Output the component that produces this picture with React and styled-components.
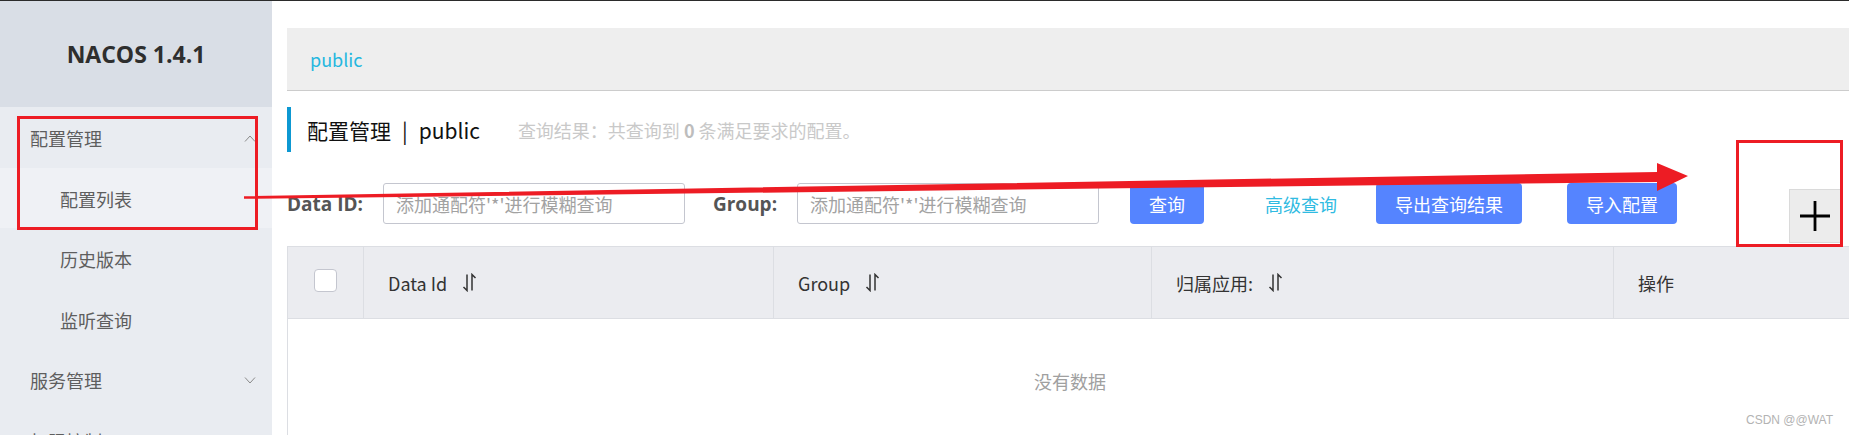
import styled, { createGlobalStyle } from "styled-components";

const GlobalStyle = createGlobalStyle`
  html, body {
    margin: 0;
    padding: 0;
  }
  body {
    overflow: hidden;
    background: #fff;
    font-family: "Noto Sans CJK SC", "Noto Sans", sans-serif;
  }
`;

const menu = [
  { label: "配置管理", open: true },
  { label: "配置列表", sub: true, active: true },
  { label: "历史版本", sub: true },
  { label: "监听查询", sub: true },
  { label: "服务管理", open: false },
  { label: "权限控制", open: false },
];

const columns = [
  { key: "id", label: "Data Id", sort: true },
  { key: "group", label: "Group", sort: true },
  { key: "app", label: "归属应用:", sort: true },
  { key: "op", label: "操作" },
];

function Chevron({ up }) {
  return (
    <ChevronIcon viewBox="0 0 12 7" width="12" height="7">
      <polyline
        points={up ? "1,6.5 6,1 11,6.5" : "1,0.5 6,6 11,0.5"}
        fill="none"
        stroke="#8a8a8a"
        strokeWidth="1"
      />
    </ChevronIcon>
  );
}

function SortIcon() {
  return (
    <svg viewBox="0 0 15 19" width="15" height="19">
      <path d="M5 1.5 V17.5 L1.5 14" fill="none" stroke="#333" strokeWidth="1.5" />
      <path d="M10 17.5 V1.5 L13.5 5" fill="none" stroke="#333" strokeWidth="1.5" />
    </svg>
  );
}

function Annotations() {
  return (
    <Overlay viewBox="0 0 1849 435" width="1849" height="435">
      <rect x="18.5" y="117.5" width="238" height="111" fill="none" stroke="#ed1c24" strokeWidth="3" />
      <rect x="1737.5" y="141.5" width="104" height="104" fill="none" stroke="#ed1c24" strokeWidth="3" />
      <polygon
        points="244,196.2 1657,172 1657,163 1688,176 1657,191 1657,182 244,198.8"
        fill="#ed1c24"
      />
    </Overlay>
  );
}

export default function App() {
  return (
    <>
      <GlobalStyle />
      <Page>
        <TopLine />
        <Frame>
          <Sidebar>
            <Brand>NACOS 1.4.1</Brand>
            {menu.map((m) => (
              <MenuItem key={m.label} $sub={m.sub} $active={m.active}>
                {m.label}
                {!m.sub && <Chevron up={m.open} />}
              </MenuItem>
            ))}
          </Sidebar>

          <Main>
            <Content>
              <Breadcrumb>
                <Crumb>public</Crumb>
              </Breadcrumb>

              <TitleRow>
                <TitleMain>
                  配置管理<Sep>|</Sep>public
                </TitleMain>
                <TitleHint>
                  查询结果：共查询到 <b>0</b> 条满足要求的配置。
                </TitleHint>
              </TitleRow>

              <SearchRow>
                <Label>Data ID:</Label>
                <Input placeholder="添加通配符'*'进行模糊查询" />
                <Label $gap={28}>Group:</Label>
                <Input placeholder="添加通配符'*'进行模糊查询" />
                <Button $gap={31}>查询</Button>
                <LinkButton>高级查询</LinkButton>
                <Button $gap={39}>导出查询结果</Button>
                <Button $gap={45}>导入配置</Button>
                <PlusButton>
                  <svg viewBox="0 0 30 30" width="30" height="30">
                    <path d="M15 0 V30 M0 15 H30" stroke="#000" strokeWidth="2.8" />
                  </svg>
                </PlusButton>
              </SearchRow>

              <Table>
                <HeadRow>
                  <HeadCell $center>
                    <Checkbox />
                  </HeadCell>
                  {columns.map((c) => (
                    <HeadCell key={c.key}>
                      {c.label}
                      {c.sort && <SortIcon />}
                    </HeadCell>
                  ))}
                </HeadRow>
                <Empty>没有数据</Empty>
              </Table>
            </Content>
          </Main>
        </Frame>
        <Annotations />
        <Watermark>CSDN @@WAT</Watermark>
      </Page>
    </>
  );
}

const Page = styled.div`
  position: relative;
  width: 1849px;
  height: 435px;
  overflow: hidden;
  display: flex;
  flex-direction: column;
`;

const TopLine = styled.div`
  height: 1px;
  background: #2b2b2b;
  flex-shrink: 0;
`;

const Frame = styled.div`
  flex: 1;
  display: flex;
  min-height: 0;
`;

const Sidebar = styled.aside`
  width: 272px;
  flex-shrink: 0;
  background: #e9ecf1;
`;

const Brand = styled.div`
  height: 106px;
  background: #d9dee6;
  display: flex;
  align-items: center;
  justify-content: center;
  font-family: "Open Sans", sans-serif;
  font-weight: 700;
  font-size: 23px;
  color: #2e2e2e;
`;

const MenuItem = styled.div`
  height: 60.5px;
  box-sizing: border-box;
  display: flex;
  align-items: center;
  justify-content: space-between;
  padding: 2px 16px 0 ${(p) => (p.$sub ? 60 : 30)}px;
  background: ${(p) => (p.$active ? "#eff1f5" : "transparent")};
  font-size: 18px;
  color: #5e5e5e;
`;

const ChevronIcon = styled.svg`
  display: block;
`;

const Main = styled.main`
  flex: 1;
  min-width: 0;
  overflow: hidden;
  padding: 27px 0 0 15px;
`;

const Content = styled.div`
  width: 1566px;
`;

const Breadcrumb = styled.div`
  height: 62px;
  background: #eeeeee;
  border-bottom: 1px solid #cccccc;
  display: flex;
  align-items: center;
  padding-left: 23px;
`;

const Crumb = styled.span`
  font-size: 18px;
  color: #25b7df;
`;

const TitleRow = styled.div`
  margin-top: 16px;
  height: 45px;
  border-left: 4px solid #0d98d2;
  padding-left: 16px;
  display: flex;
  align-items: center;
`;

const TitleMain = styled.span`
  font-size: 21px;
  color: #111;
`;

const Sep = styled.span`
  margin: 0 11px;
`;

const TitleHint = styled.span`
  margin-left: 38px;
  font-size: 18px;
  color: #c9c9c9;

  b {
    color: #bdbdbd;
  }
`;

const SearchRow = styled.div`
  margin-top: 31px;
  height: 41px;
  display: flex;
  align-items: center;
`;

const Label = styled.label`
  margin-left: ${(p) => p.$gap || 0}px;
  margin-right: 20px;
  font-family: "Open Sans", sans-serif;
  font-weight: 700;
  font-size: 19px;
  color: #555;
`;

const Input = styled.input`
  width: 302px;
  height: 41px;
  box-sizing: border-box;
  border: 1px solid #c4c6cf;
  border-radius: 3px;
  padding: 0 12px;
  font-family: inherit;
  font-size: 18px;
  outline: none;

  &::placeholder {
    color: #a2a2a2;
  }
`;

const Button = styled.button`
  margin-left: ${(p) => p.$gap || 0}px;
  height: 41px;
  padding: 0 19px;
  border: none;
  border-radius: 4px;
  background: #5584ff;
  color: #fff;
  font-family: inherit;
  font-size: 18px;
`;

const LinkButton = styled.span`
  margin-left: 61px;
  font-size: 18px;
  color: #30bbe2;
`;

const PlusButton = styled.div`
  margin-left: auto;
  margin-right: 12px;
  align-self: flex-start;
  margin-top: 6px;
  width: 52px;
  height: 54px;
  flex-shrink: 0;
  box-sizing: border-box;
  background: #ececec;
  border: 1px solid #dadada;
  display: flex;
  align-items: center;
  justify-content: center;
`;

const Table = styled.div`
  margin-top: 22px;
  border: 1px solid #dcdee3;
  border-bottom: none;
`;

const HeadRow = styled.div`
  display: grid;
  grid-template-columns: 76px 410px 378px 462px 1fr;
  height: 72px;
  background: #ebecf0;
  border-bottom: 1px solid #dcdee3;
  box-sizing: border-box;
`;

const HeadCell = styled.div`
  display: flex;
  align-items: center;
  justify-content: ${(p) => (p.$center ? "center" : "flex-start")};
  gap: 15px;
  padding-left: ${(p) => (p.$center ? 0 : 24)}px;
  border-right: 1px solid #dcdee3;
  font-size: 18px;
  color: #333;

  &:last-child {
    border-right: none;
  }
`;

const Checkbox = styled.span`
  width: 23px;
  height: 23px;
  box-sizing: border-box;
  background: #fff;
  border: 1px solid #c4c6cf;
  border-radius: 4px;
  margin-top: -4px;
`;

const Empty = styled.div`
  padding-top: 49px;
  height: 120px;
  text-align: center;
  font-size: 18px;
  color: #a0a0a0;
`;

const Overlay = styled.svg`
  position: absolute;
  top: 0;
  left: 0;
  pointer-events: none;
`;

const Watermark = styled.div`
  position: absolute;
  right: 16px;
  bottom: 8px;
  font-family: "Liberation Sans", sans-serif;
  font-size: 12px;
  color: #b3b3b3;
`;
